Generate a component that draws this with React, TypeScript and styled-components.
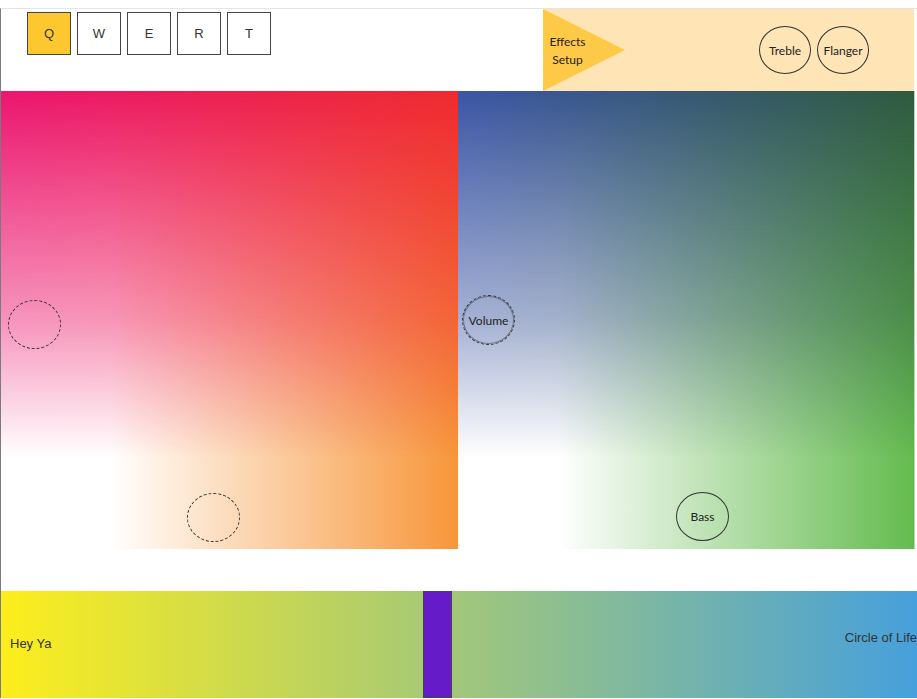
import React from "react";
import styled, { createGlobalStyle } from "styled-components";

const GlobalStyle = createGlobalStyle`
  html, body { margin: 0; padding: 0; background: #ffffff; }
  body { font-family: "Liberation Sans", Arial, sans-serif; overflow: hidden; }
`;

const Page = styled.div`
  margin-top: 8px;
  width: 916px;
  border-top: 1px solid #e4e4e4;
  border-left: 1px solid #7a7a7a;
  overflow: hidden;
`;

const TopBar = styled.div`
  display: flex;
  height: 82px;
`;

const Keys = styled.div`
  display: flex;
  align-items: flex-start;
  gap: 6px;
  width: 542px;
  padding: 3px 0 0 26px;
  box-sizing: border-box;
`;

const Key = styled.div<{ $active?: boolean }>`
  width: 44px;
  height: 43px;
  box-sizing: border-box;
  border: 1px solid #444;
  background: ${(p) => (p.$active ? "#fdc82f" : "#ffffff")};
  color: #333;
  font-size: 13px;
  display: flex;
  align-items: center;
  justify-content: center;
`;

const Effects = styled.div`
  position: relative;
  display: flex;
  align-items: center;
  justify-content: flex-end;
  gap: 6px;
  width: 371px;
  height: 82px;
  padding-right: 45px;
  box-sizing: border-box;
  background: #ffe4b5;
`;

const Triangle = styled.div`
  position: absolute;
  left: 0;
  top: 0;
  width: 82px;
  height: 82px;
  background: #fec946;
  clip-path: polygon(0 0, 100% 50%, 0 100%);
`;

const EffectsLabel = styled.div`
  position: absolute;
  left: 0;
  top: 24px;
  width: 49px;
  text-align: center;
  font-family: Lato, "Open Sans", sans-serif;
  font-size: 12px;
  line-height: 18px;
  color: #222;
`;

const Knob = styled.div<{ $w?: number; $h?: number }>`
  width: ${(p) => p.$w ?? 52}px;
  height: ${(p) => p.$h ?? 48}px;
  box-sizing: border-box;
  border: 1px solid #333;
  border-radius: 50%;
  display: flex;
  align-items: center;
  justify-content: center;
  font-family: Lato, "Open Sans", sans-serif;
  font-size: 12px;
  color: #222;
`;

const Pads = styled.div`
  display: grid;
  grid-template-columns: 457px 457px;
  height: 458px;
`;

const Pad = styled.div<{ $tl: string; $tr: string; $br: string; $white: number; $edge?: boolean }>`
  position: relative;
  box-sizing: border-box;
  border-right: ${(p) => (p.$edge ? "1px solid #c4cfc0" : "none")};
  background: linear-gradient(to right, #ffffff ${(p) => p.$white}%, ${(p) => p.$br} 100%);

  &::before {
    content: "";
    position: absolute;
    inset: 0;
    background: linear-gradient(to right, ${(p) => p.$tl}, ${(p) => p.$tr});
    -webkit-mask-image: linear-gradient(to bottom, #000 0%, rgba(0, 0, 0, 0.46) 50%, rgba(0, 0, 0, 0) 80%);
    mask-image: linear-gradient(to bottom, #000 0%, rgba(0, 0, 0, 0.46) 50%, rgba(0, 0, 0, 0) 80%);
  }
`;

const PadKnob = styled(Knob)<{ $x: number; $y: number; $line: string; $ring?: boolean }>`
  position: absolute;
  z-index: 1;
  left: ${(p) => p.$x}px;
  top: ${(p) => p.$y}px;
  border: ${(p) => p.$line};
  box-shadow: ${(p) => (p.$ring ? "inset 0 0 0 1px rgba(40, 40, 40, 0.45)" : "none")};
`;

const Spacer = styled.div`
  height: 42px;
`;

const Track = styled.div`
  position: relative;
  height: 107px;
  background: linear-gradient(to right, #fdee1c, #46a0db);
  color: #333;
  font-size: 13px;
`;

const LeftLabel = styled.span`
  position: absolute;
  left: 9px;
  top: 45px;
`;

const RightLabel = styled.span`
  position: absolute;
  right: 0;
  top: 39px;
`;

const Handle = styled.div`
  position: absolute;
  left: 422px;
  top: 0;
  width: 29px;
  height: 107px;
  box-sizing: border-box;
  border: 1px solid #444;
  background: #661bc8;
`;

export default function App() {
  return (
    <>
      <GlobalStyle />
      <Page>
        <TopBar>
          <Keys>
            <Key $active>Q</Key>
            <Key>W</Key>
            <Key>E</Key>
            <Key>R</Key>
            <Key>T</Key>
          </Keys>
          <Effects>
            <Triangle />
            <EffectsLabel>
              Effects
              <br />
              Setup
            </EffectsLabel>
            <Knob>Treble</Knob>
            <Knob>Flanger</Knob>
          </Effects>
        </TopBar>
        <Pads>
          <Pad $tl="#ec1470" $tr="#ee2a30" $br="#f7963a" $white={24}>
            <PadKnob $x={7} $y={209} $w={53} $h={49} $line="1px dashed #333" />
            <PadKnob $x={186} $y={402} $w={53} $h={49} $line="1px dashed #333" />
          </Pad>
          <Pad $tl="#3b55a6" $tr="#2f5a40" $br="#64bb4f" $white={22} $edge>
            <PadKnob $x={4} $y={204} $w={53} $h={50} $line="1px dashed #333" $ring>
              Volume
            </PadKnob>
            <PadKnob $x={218} $y={401} $w={53} $h={49} $line="1px solid #333">
              Bass
            </PadKnob>
          </Pad>
        </Pads>
        <Spacer />
        <Track>
          <LeftLabel>Hey Ya</LeftLabel>
          <Handle />
          <RightLabel>Circle of Life</RightLabel>
        </Track>
      </Page>
    </>
  );
}
